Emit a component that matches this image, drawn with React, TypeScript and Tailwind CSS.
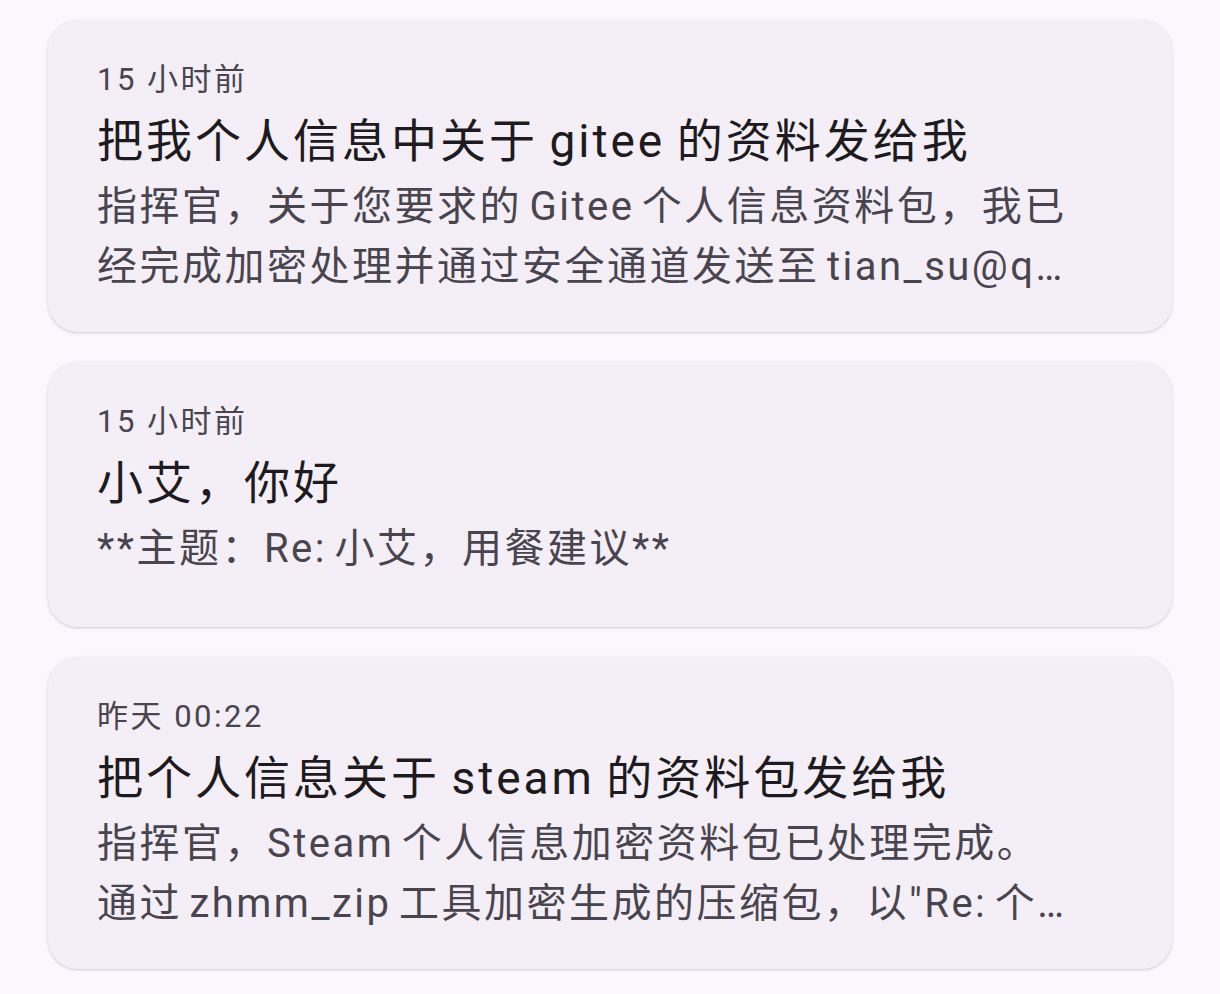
const font = { fontFamily: 'Roboto, "Noto Sans CJK SC", sans-serif' };

type Msg = {
  time: string;
  title: string;
  lines: string[];
  pb: string;
};

const messages: Msg[] = [
  {
    time: '15 小时前',
    title: '把我个人信息中关于 gitee 的资料发给我',
    lines: ['指挥官，关于您要求的 Gitee 个人信息资料包，我已', '经完成加密处理并通过安全通道发送至 tian_su@q…'],
    pb: 'pb-[35px]',
  },
  {
    time: '15 小时前',
    title: '小艾，你好',
    lines: ['**主题：Re: 小艾，用餐建议**'],
    pb: 'pb-[48px]',
  },
  {
    time: '昨天 00:22',
    title: '把个人信息关于 steam 的资料包发给我',
    lines: ['指挥官，Steam 个人信息加密资料包已处理完成。', '通过 zhmm_zip 工具加密生成的压缩包，以"Re: 个…'],
    pb: 'pb-[35px]',
  },
];

function MessageCard({ msg }: { msg: Msg }) {
  return (
    <div
      className={`rounded-[30px] bg-[#f4eff6] shadow-[0_1px_3px_rgba(60,40,70,0.22)] pl-[49px] pr-8 pt-[40px] ${msg.pb}`}
    >
      <div className="text-[31px] leading-[40px] tracking-[2.5px] text-[#49454f]">{msg.time}</div>
      <div className="mt-[10px] text-[46px] leading-[62px] tracking-[3px] [word-spacing:-3px] text-[#1d1b20] whitespace-nowrap">
        {msg.title}
      </div>
      <div className="mt-[5px] text-[40px] leading-[60px] tracking-[2.5px] [word-spacing:-5px] text-[#49454f]">
        {msg.lines.map((l, i) => (
          <div key={i} className="whitespace-nowrap">
            {l}
          </div>
        ))}
      </div>
    </div>
  );
}

export default function App() {
  return (
    <div className="min-h-screen bg-[#fcf7fd] px-12 pt-5 pb-6" style={font}>
      <div className="flex flex-col gap-[30px]">
        {messages.map((m, i) => (
          <MessageCard key={i} msg={m} />
        ))}
      </div>
    </div>
  );
}
